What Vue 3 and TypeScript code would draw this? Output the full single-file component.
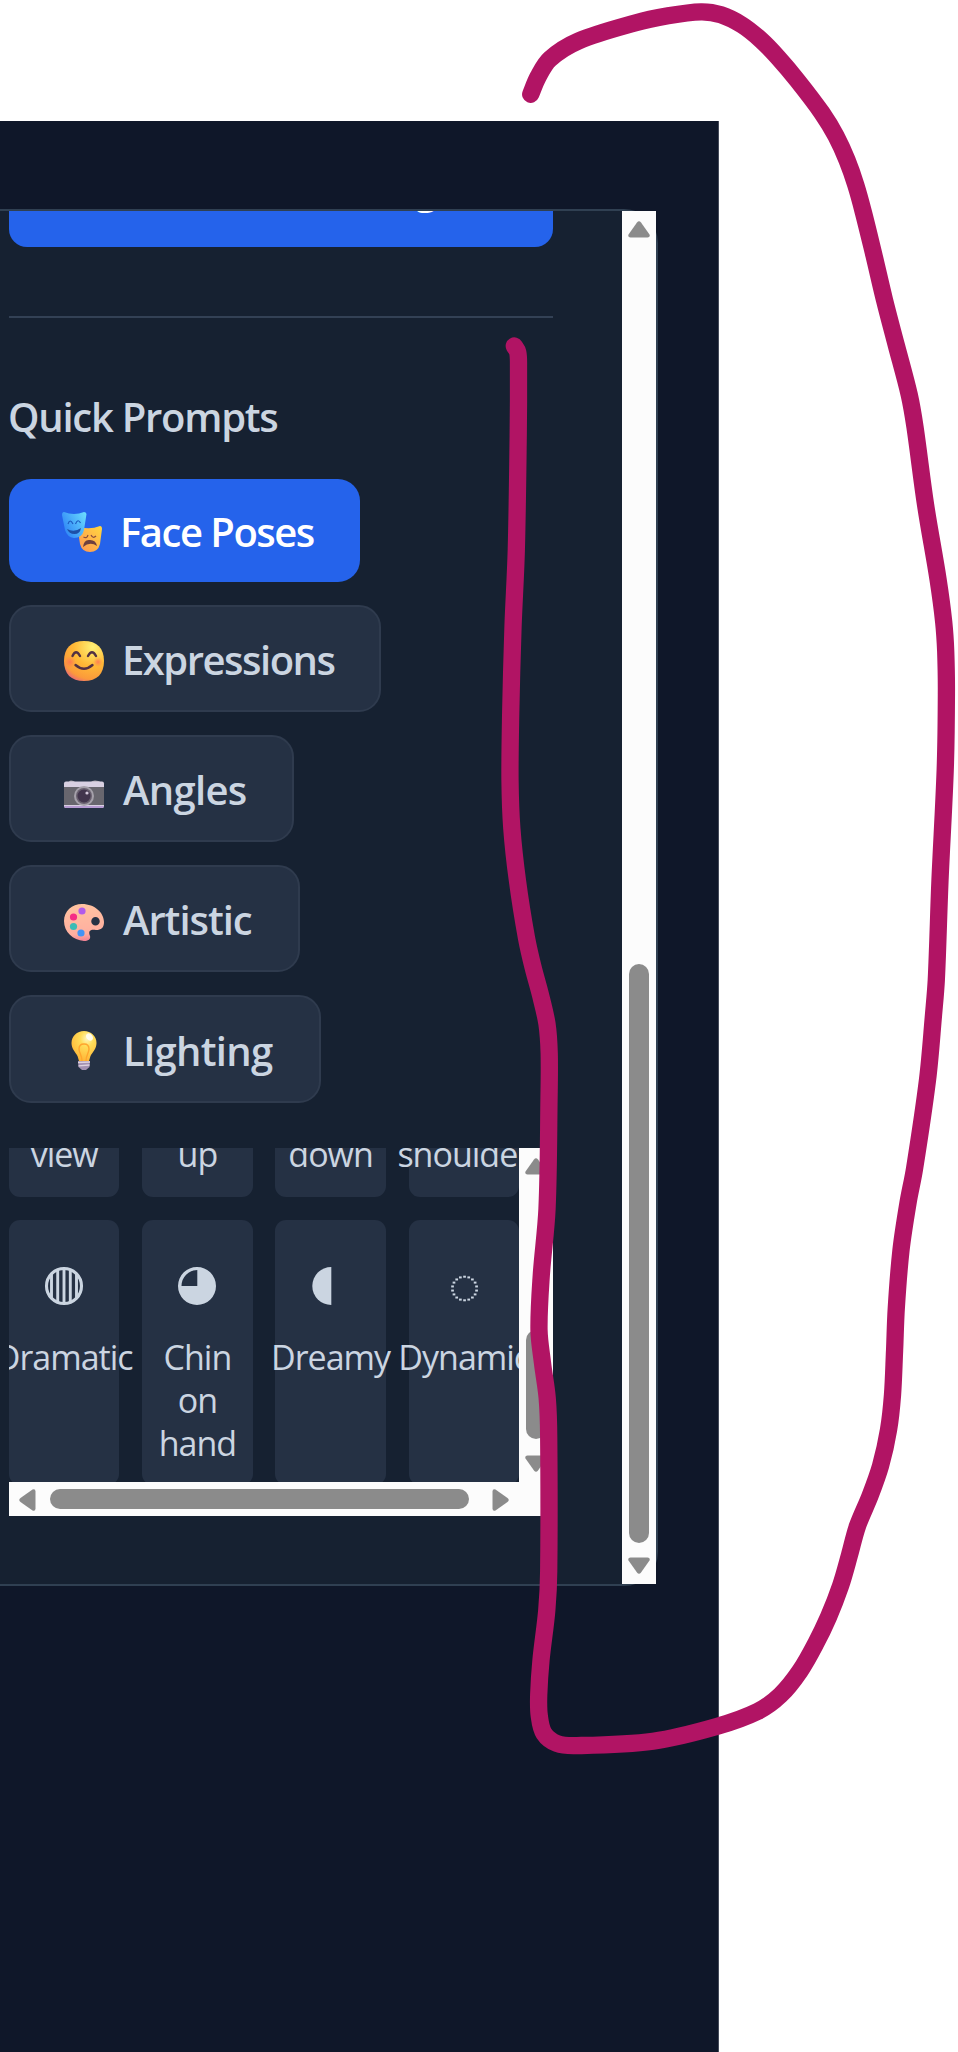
<script setup lang="ts">
interface Category {
  id: string
  label: string
  width: number
  active?: boolean
}

type Point = [number, number]

const categories: Category[] = [
  { id: 'poses', label: 'Face Poses', width: 351, active: true },
  { id: 'expressions', label: 'Expressions', width: 372 },
  { id: 'angles', label: 'Angles', width: 285 },
  { id: 'artistic', label: 'Artistic', width: 291 },
  { id: 'lighting', label: 'Lighting', width: 312 },
]

const topRow: string[] = ['view', 'up', 'down', 'shoulder']
const bottomRow = [
  { icon: 'striped', label: 'Dramatic' },
  { icon: 'pie', label: 'Chin on hand' },
  { icon: 'half', label: 'Dreamy' },
  { icon: 'dotted', label: 'Dynamic' },
]

const dots: Point[] = Array.from({ length: 18 }, (_, i) => {
  const a = (i / 18) * Math.PI * 2 - Math.PI / 2
  return [20.5 + Math.cos(a) * 12.2, 22.5 + Math.sin(a) * 11.8] as Point
})

const strokePoints: Point[] = [
  [530.7, 94.3], [538, 77], [550, 59], [578.5, 41], [635, 23], [668, 15.8], [701, 11.8], [721, 14.8],
  [742, 25], [761, 40], [778, 57.500], [797, 80], [822, 113], [836, 136], [847, 160],
  [855.8, 185], [863.3, 212], [873.9, 255], [884.5, 300], [896.5, 346], [909.3, 395],
  [915, 427], [925.6, 505], [938, 579], [943.7, 622], [945.7, 651], [946.4, 694],
  [945.2, 770], [940, 880], [936.3, 980], [933.5, 1015], [927.5, 1080], [914.5, 1169],
  [908, 1203], [901, 1250], [896.3, 1308], [894.6, 1350], [892.5, 1395], [888.5, 1430],
  [880.5, 1466], [870, 1496], [857.5, 1526], [849.5, 1555], [840.5, 1586], [828.5, 1617],
  [815.5, 1644], [800, 1671], [780.5, 1695], [757.5, 1711.500], [716.7, 1726.5], [653, 1741.2],
  [576.7, 1745.6], [557, 1743.5], [544, 1733.500], [539.3, 1716], [538.7, 1695], [541, 1660], [546.8, 1610],
  [548.7, 1571], [548.7, 1437], [547.2, 1398], [542.5, 1363], [539, 1330], [541.3, 1275],
  [547, 1209], [549, 1100], [549.2, 1053], [547, 1024], [540.5, 995], [533, 967],
  [526.5, 938], [517.5, 881], [511.8, 828], [510, 780], [510.7, 713], [513, 627],
  [516.3, 550], [518.2, 436], [518.5, 366], [517.7, 352], [514.3, 346],
]

function smooth(p: Point[]): string {
  let d = `M${p[0][0]} ${p[0][1]}`
  for (let i = 0; i < p.length - 1; i++) {
    const a = p[Math.max(i - 1, 0)]
    const b = p[i]
    const c = p[i + 1]
    const e = p[Math.min(i + 2, p.length - 1)]
    // Limit the tangents by segment length so uneven spacing does not overshoot.
    const len = Math.hypot(c[0] - b[0], c[1] - b[1])
    const t1 = Math.hypot(c[0] - a[0], c[1] - a[1]) || 1
    const t2 = Math.hypot(e[0] - b[0], e[1] - b[1]) || 1
    const k = len / 3
    d += `C${(b[0] + ((c[0] - a[0]) / t1) * k).toFixed(1)} ${(b[1] + ((c[1] - a[1]) / t1) * k).toFixed(1)} `
    d += `${(c[0] - ((e[0] - b[0]) / t2) * k).toFixed(1)} ${(c[1] - ((e[1] - b[1]) / t2) * k).toFixed(1)} ${c[0]} ${c[1]}`
  }
  return d
}

const strokePath = smooth(strokePoints)
</script>

<template>
  <div class="canvas">
    <main class="page">
      <section class="panel">
        <div class="content">
          <div class="generate"><span>g</span></div>
          <hr class="divider" />
          <h2 class="title">Quick Prompts</h2>

          <div class="categories">
            <button
              v-for="c in categories"
              :key="c.id"
              class="category"
              :class="[{ active: c.active }, c.id]"
              :style="{ width: c.width + 'px' }"
            >
              <svg v-if="c.id === 'poses'" class="emoji" viewBox="0 0 40 40">
                <defs>
                  <linearGradient id="mb" x1="0" y1=".6" x2="1" y2="0"><stop stop-color="#2f86f6" /><stop offset="1" stop-color="#6de0ff" /></linearGradient>
                  <linearGradient id="mo" x1="0" y1="1" x2="1" y2="0"><stop stop-color="#ff9253" /><stop offset="1" stop-color="#ffd83f" /></linearGradient>
                </defs>
                <path d="M18 15Q28 18 38 14Q40 14 40 17L38 32Q36 40 28 40Q20 40 18 32L16 18Z" fill="url(#mo)" />
                <path d="M2 0Q12 4 22 0Q24 0 24.500 2L22 18Q20 26 12 26Q5 25 3 18L0 3Q0 0 2 0Z" fill="url(#mb)" />
                <path d="M5 17Q12 21 19 16Q18 22 12.500 22Q7 22 5 17Z" fill="#1d50a8" />
                <path d="M6 12Q8 6 11 12M13.500 12Q16 6 18.500 11" fill="none" stroke="#1d5cc0" stroke-width="1.200" />
                <path d="M21 35Q22 27 28 28Q34 28 35 34Q28 29 21 35Z" fill="#70403f" />
                <path d="M21.500 25Q25 27 26 23M29 23Q31 27 34 24" fill="none" stroke="#8b4e3d" stroke-width="1.200" />
              </svg>
              <svg v-else-if="c.id === 'expressions'" class="emoji" viewBox="0 0 40 40">
                <defs>
                  <radialGradient id="face" cx=".72" cy=".15" r=".95"><stop stop-color="#fff176" /><stop offset=".5" stop-color="#ffb936" /><stop offset=".85" stop-color="#fb9a3b" /><stop offset="1" stop-color="#e96878" /></radialGradient>
                  <radialGradient id="cheek"><stop stop-color="#ff6d57" stop-opacity=".8" /><stop offset="1" stop-color="#ff7d52" stop-opacity="0" /></radialGradient>
                </defs>
                <path d="M20 0C33 0 40 7 40 20S33 40 20 40S0 33 0 20S7 0 20 0Z" fill="url(#face)" />
                <circle cx="6" cy="21" r="6" fill="url(#cheek)" /><circle cx="34" cy="21" r="5" fill="url(#cheek)" />
                <path d="M8.500 15Q12 7.500 16 15M24 15Q28 7.500 32 15M11.500 24Q20 31.500 28.500 24" fill="none" stroke="#533143" stroke-width="2.400" stroke-linecap="round" />
              </svg>
              <svg v-else-if="c.id === 'angles'" class="emoji" viewBox="0 0 40 40">
                <path d="M5 8Q5 6.500 7 6.500Q10 6.500 11 8ZM27 8Q28 6.500 31 6.500Q35 6.500 36 8Z" fill="#aaa6ae" />
                <rect y="7.500" width="40" height="26.500" rx="2" fill="#d8d0e2" />
                <rect y="13" width="40" height="18" fill="#68666e" />
                <path d="M0 32H40Q40 34 38 34H2Q0 34 0 32Z" fill="#b69ad2" />
                <circle cx="20" cy="22" r="10" fill="#a5a0aa" /><circle cx="20" cy="22" r="8" fill="#69606f" />
                <circle cx="20" cy="22" r="6.500" fill="#42354d" /><circle cx="23" cy="19" r="1.600" fill="#d5c9dd" />
              </svg>
              <svg v-else-if="c.id === 'artistic'" class="emoji" viewBox="0 0 40 40">
                <defs><linearGradient id="pal" x1=".4" y1="0" x2=".5" y2="1"><stop stop-color="#ffc2a0" /><stop offset=".8" stop-color="#ffafa0" /><stop offset="1" stop-color="#f08194" /></linearGradient></defs>
                <path fill-rule="evenodd" d="M18 2C31 2 40 11 40 20C40 26 37 28 32 28C26 27 24 29 26 34C27 37 24 39 20 39C9 38 0 30 0 19C0 9 8 2 18 2ZM31.500 15A4.200 4.200 0 1 0 31.500 23.500A4.200 4.200 0 1 0 31.500 15Z" fill="url(#pal)" />
                <circle cx="18" cy="9" r="3.600" fill="#b15bea" /><circle cx="9.500" cy="15" r="3.600" fill="#f52c86" />
                <circle cx="9.500" cy="24.500" r="3.600" fill="#3bbcb5" /><circle cx="17" cy="31" r="3.600" fill="#4293f5" />
              </svg>
              <svg v-else class="emoji" viewBox="0 0 40 40">
                <defs><radialGradient id="bulb" cx=".62" cy=".25" r=".75"><stop stop-color="#fff6bd" /><stop offset=".35" stop-color="#ffdd59" /><stop offset="1" stop-color="#ffb637" /></radialGradient></defs>
                <path d="M20 0C27 0 32.500 5 32.500 12C32.500 18 28.500 21 26.500 25L25 30H15L13.500 25C11.500 21 7.500 18 7.500 12C7.500 5 13 0 20 0Z" fill="url(#bulb)" />
                <path d="M18 30C18 24 15 22 15 18Q15 13 20 13Q25 13 25 18C25 22 22 24 22 30" fill="none" stroke="#ffa52e" stroke-width="1.400" />
                <path d="M14 30H26L25.500 36L22 39H18L14.500 36Z" fill="#a391b1" />
                <path d="M14 31.500L26 31M14.500 34.800L25.500 34" stroke="#dcd1df" stroke-width="1.300" />
                <ellipse cx="25.500" cy="6" rx="3" ry="4" transform="rotate(-35 25.500 6)" fill="#fff" opacity=".85" />
              </svg>
              <span class="label">{{ c.label }}</span>
            </button>
          </div>

          <div class="prompt-box">
            <div class="prompts">
              <div class="row first">
                <div v-for="t in topRow" :key="t" class="card"><span>{{ t }}</span></div>
              </div>
              <div class="row second">
                <div v-for="p in bottomRow" :key="p.label" class="card">
                  <svg class="glyph" viewBox="0 0 40 40">
                    <template v-if="p.icon === 'striped'">
                      <circle cx="20" cy="20" r="17.500" fill="none" stroke="currentColor" stroke-width="3.100" />
                      <path d="M7.500 8V32M13.700 4V36M20 3V37M26.300 4V36M32.500 8V32" stroke="currentColor" stroke-width="2.900" />
                    </template>
                    <path v-else-if="p.icon === 'pie'" fill-rule="evenodd" fill="currentColor" d="M20 1A19 19 0 1 1 20 39A19 19 0 1 1 20 1ZM20.300 4A16 16 0 0 0 4.500 20H20.300Z" />
                    <path v-else-if="p.icon === 'half'" fill="currentColor" d="M20.300 1V39A19 19 0 0 1 20.300 1Z" />
                    <template v-else>
                      <rect v-for="(d, i) in dots" :key="i" :x="d[0] - 1.3" :y="d[1] - 1" width="2.700" height="2" fill="currentColor" />
                    </template>
                  </svg>
                  <span>{{ p.label }}</span>
                </div>
              </div>
            </div>
            <div class="bar inner-v">
              <svg class="arrow" viewBox="0 0 22 17"><path d="M9 1.500Q11-1 13 1.500L21.500 13.500Q22.500 16.500 19.500 16.500H2.500Q-.5 16.500 .5 13.500Z" /></svg>
              <i class="thumb"></i>
              <svg class="arrow down" viewBox="0 0 22 17"><path d="M9 1.500Q11-1 13 1.500L21.500 13.500Q22.500 16.500 19.500 16.500H2.500Q-.5 16.500 .5 13.500Z" /></svg>
            </div>
            <div class="bar inner-h">
              <svg class="arrow" viewBox="0 0 17 22"><path d="M1.500 9Q-1 11 1.500 13L13.500 21.500Q16.500 22.500 16.500 19.500V2.500Q16.500-.5 13.500 .5Z" /></svg>
              <i class="thumb"></i>
              <svg class="arrow right" viewBox="0 0 17 22"><path d="M1.500 9Q-1 11 1.500 13L13.500 21.500Q16.500 22.500 16.500 19.500V2.500Q16.500-.5 13.500 .5Z" /></svg>
            </div>
          </div>
        </div>
        <div class="bar outer">
          <svg class="arrow" viewBox="0 0 22 17"><path d="M9 1.500Q11-1 13 1.500L21.500 13.500Q22.500 16.500 19.500 16.500H2.500Q-.5 16.500 .5 13.500Z" /></svg>
          <i class="thumb"></i>
          <svg class="arrow down" viewBox="0 0 22 17"><path d="M9 1.500Q11-1 13 1.500L21.500 13.500Q22.500 16.500 19.500 16.500H2.500Q-.5 16.500 .5 13.500Z" /></svg>
        </div>
      </section>
    </main>
    <svg class="marker" viewBox="0 0 958 2052"><path :d="strokePath" /></svg>
  </div>
</template>

<style>
body { background: #fff; }
</style>

<style scoped>
* { box-sizing: border-box; }
.canvas {
  position: relative;
  width: 958px;
  height: 2052px;
  padding-top: 121px;
  overflow: hidden;
  background: #fff;
  font-family: "Segoe UI", "Open Sans", "Noto Sans", sans-serif;
  color: #cbd5e1;
}
.page {
  width: 719px;
  height: 1931px;
  padding-top: 88px;
  background: #0f1729;
  border-right: 1px solid #454b5a;
}
.panel {
  display: flex;
  justify-content: space-between;
  width: 658px;
  height: 1377px;
  border: 2px solid #304052;
  border-left: 0;
  border-radius: 0 34px 34px 0;
  background: #162131;
}
.content { width: 544px; margin-left: 9px; }
.generate {
  height: 36px;
  padding-left: 405px;
  overflow: hidden;
  border-radius: 0 0 18px 18px;
  background: #2563eb;
  color: #fff;
  font-size: 40px;
  font-weight: 600;
  line-height: 40px;
}
.generate span { display: block; margin-top: -43px; padding-left: 1px; }
.divider { height: 2px; margin: 69px 0 0; border: 0; background: #334155; }
.title {
  margin: 72px 0 0 -1px;
  font-size: 40px;
  font-weight: 600;
  line-height: 54px;
  letter-spacing: -1.25px;
  white-space: nowrap;
}
.categories { display: flex; flex-direction: column; gap: 23px; margin-top: 35px; }
.category {
  display: flex;
  align-items: center;
  height: 107px;
  padding: 0 0 0 53px;
  border: 2px solid #2f3b4e;
  border-radius: 22px;
  background: #253144;
  color: inherit;
  font: 600 40px/54px "Segoe UI", "Open Sans", "Noto Sans", sans-serif;
  white-space: nowrap;
}
.category.active {
  height: 103px;
  border: 0;
  background: #2563eb;
  color: #fff;
}
.category.lighting { height: 108px; }
.emoji { flex: none; width: 40px; height: 40px; margin-right: 18px; overflow: visible; }
.category .label { margin-top: 3px; }
.poses .emoji { margin-top: 3px; }
.expressions .emoji { margin-top: 5px; }
.angles .emoji { margin-top: 11px; }
.artistic .emoji { margin-top: 7px; }
.lighting .emoji { margin-top: 4px; }
.poses .label, .expressions .label { letter-spacing: -1.5px; }
.angles .label { margin-left: 1px; letter-spacing: -0.700px; }
.artistic .label { margin-left: 1px; letter-spacing: -1.05px; }
.lighting .label { margin-left: 1px; letter-spacing: -0.700px; }
.prompt-box {
  display: grid;
  grid-template: 334px 34px / 510px 34px;
  margin-top: 45px;
}
.prompts { overflow: hidden; font-size: 34px; line-height: 43px; text-align: center; letter-spacing: -1px; }
.row { display: grid; grid-template-columns: repeat(4, 110.400px); column-gap: 22.800px; }
.card {
  display: flex;
  flex-direction: column;
  align-items: center;
  border-radius: 11px;
  background: #253144;
}
.first .card { height: 49px; border-radius: 0 0 11px 11px; }
.first span { margin-top: -15px; }
.second { margin-top: 23px; }
.second .card { height: 265px; padding-top: 46px; }
.second span { margin-top: 30px; }
.glyph { flex: none; width: 40px; height: 40px; }
.bar { display: flex; background: #fcfcfc; }
.arrow { flex: none; width: 22px; height: 17px; fill: #8b8b8b; }
.down { transform: rotate(180deg); }
.thumb { display: block; border-radius: 10px; background: #8b8b8b; }
.outer { flex-direction: column; align-items: center; width: 34px; padding-top: 10px; }
.outer .thumb { width: 20px; height: 579px; margin: 726px 0 14px; }
.inner-v { flex-direction: column; align-items: center; padding-top: 10px; }
.inner-v .thumb { width: 20px; height: 109px; margin: 155px 0 16px; }
.inner-h { grid-column: 1 / 3; padding: 7px 0 0 10px; }
.inner-h .arrow { width: 17px; height: 22px; }
.inner-h .thumb { width: 419px; height: 20px; margin: 0 23px 0 14px; }
.right { transform: rotate(180deg); }
.marker { position: absolute; inset: 0; width: 958px; height: 2052px; }
.marker path { fill: none; stroke: #b11464; stroke-width: 17.300px; stroke-linecap: round; stroke-linejoin: round; }
</style>
